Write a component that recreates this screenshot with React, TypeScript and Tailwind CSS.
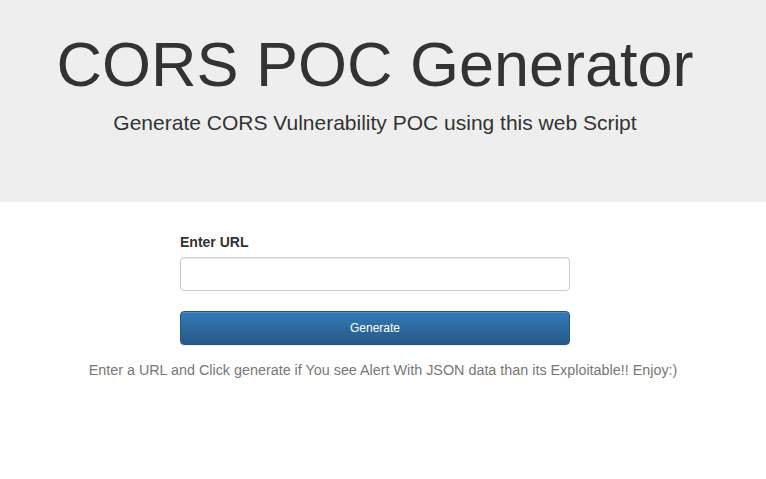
export default function App() {
  return (
    <div className="min-h-screen bg-white text-[#333] font-['Liberation_Sans',Arial,sans-serif]">
      <div className="bg-[#eee] pt-[30px] pb-[64px]">
        <div className="w-[750px] text-center">
          <h1 className="text-[63px] leading-[1.1] font-normal">CORS POC Generator</h1>
          <p className="mt-[9px] text-[21px] leading-[30px]">
            Generate CORS Vulnerability POC using this web Script
          </p>
        </div>
      </div>

      <div className="w-[750px]">
        <form className="ml-[180px] w-[390px] pt-[30px]" onSubmit={e => e.preventDefault()}>
          <label className="block text-[14px] leading-[20px] font-bold mb-[5px]">Enter URL</label>
          <input
            type="text"
            className="block w-full h-[34px] px-3 bg-white border border-[#ccc] rounded-[4px] shadow-[inset_0_1px_1px_rgba(0,0,0,0.075)] outline-none"
          />
          <button
            type="submit"
            className="block w-full h-[34px] mt-[20px] rounded-[4px] border border-[#245580] bg-gradient-to-b from-[#337ab7] to-[#265a88] text-white text-[12px] shadow-[inset_0_1px_0_rgba(255,255,255,0.15),0_1px_1px_rgba(0,0,0,0.075)]"
          >
            Generate
          </button>
        </form>
      </div>

      <p className="mt-[15px] text-center text-[14.35px] leading-[20px] text-[#777]">
        Enter a URL and Click generate if You see Alert With JSON data than its Exploitable!! Enjoy:)
      </p>
    </div>
  );
}
